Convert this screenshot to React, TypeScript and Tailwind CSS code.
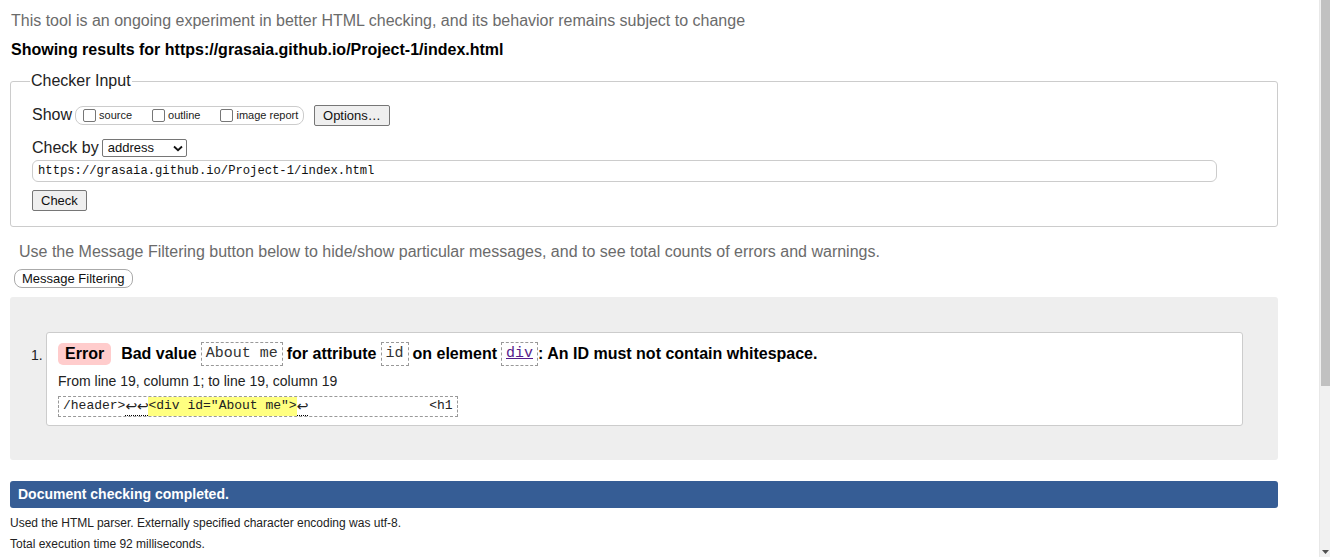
import React from 'react';

const sans = { fontFamily: '"Liberation Sans", Arial, sans-serif' };

function Checkbox({ label }: { label: string }) {
  return (
    <label className="flex items-center gap-[3px] whitespace-nowrap">
      <span className="inline-block w-[13px] h-[13px] border border-[#767676] rounded-[2px] bg-white" />
      <span className="text-[11px] text-[#222]">{label}</span>
    </label>
  );
}

function Code({ children }: { children: React.ReactNode }) {
  return (
    <span className="inline-block border border-dashed border-[#999] px-[4px] py-[1px] font-['Liberation_Mono',monospace] font-normal text-[15px] leading-[20px] text-[#333] bg-white">
      {children}
    </span>
  );
}

function Lf({ n = 1 }: { n?: number }) {
  return (
    <span className="inline-flex border-b border-dotted border-[#000]">
      {Array.from({ length: n }).map((_, i) => (
        <span key={i} className="inline-block w-[11.5px] text-center font-['DejaVu_Sans',sans-serif] text-[14px] leading-[18px]">↩</span>
      ))}
    </span>
  );
}

export default function App() {
  return (
    <div className="flex w-[1330px] h-[557px] overflow-hidden bg-white" style={sans}>
      <div className="flex-1 pl-[10px] pr-[41px] text-[#000]">
        {/* intro */}
        <p className="pt-[10px] pl-[1px] text-[16px] leading-[22px] text-[#6b6b6b]">
          This tool is an ongoing experiment in better HTML checking, and its behavior remains subject to change
        </p>
        <p className="mt-[8px] pl-[1px] text-[16px] leading-[20px] font-bold">
          Showing results for https://grasaia.github.io/Project-1/index.html
        </p>

        {/* checker input */}
        <fieldset className="mt-[11px] border border-[#ccc] rounded-[3px] px-[21px] pb-[14px] pt-[12px]">
          <legend className="-ml-[2px] px-[1px] text-[16px] leading-[20px] text-[#222]">Checker Input</legend>
          <div className="flex items-center h-[24px]">
            <span className="text-[16px] text-[#222] mr-[3px]">Show</span>
            <div className="flex items-center gap-[20px] border border-[#ccc] rounded-[8px] h-[19px] pl-[7px] pr-[5px] w-[229px]">
              <Checkbox label="source" />
              <Checkbox label="outline" />
              <Checkbox label="image report" />
            </div>
            <button className="ml-[10px] h-[21px] px-[8px] border border-[#767676] rounded-[2px] bg-[#efefef] text-[13px] text-[#111]">
              Options…
            </button>
          </div>
          <div className="flex items-center mt-[11px] h-[20px]">
            <span className="text-[16px] text-[#222] mr-[3px]">Check by</span>
            <div className="flex items-center justify-between w-[85px] h-[18px] border border-[#767676] rounded-[2px] pl-[5px] pr-[3px] text-[13px] text-[#111]">
              <span>address</span>
              <svg width="10" height="7" viewBox="0 0 10 7">
                <path d="M1 1.5 L5 5.2 L9 1.5" fill="none" stroke="#111" strokeWidth="1.8" />
              </svg>
            </div>
          </div>
          <div className="mt-[2px] w-[1185px] h-[22px] border border-[#ccc] rounded-[6px] flex items-center pl-[5px] font-['Liberation_Mono',monospace] text-[12.2px] text-[#111]">
            https://grasaia.github.io/Project-1/index.html
          </div>
          <button className="mt-[8px] h-[21px] px-[8px] border border-[#767676] rounded-[2px] bg-[#efefef] text-[13px] text-[#111]">
            Check
          </button>
        </fieldset>

        {/* filtering */}
        <p className="mt-[14px] pl-[9px] text-[16px] leading-[22px] text-[#6b6b6b]">
          Use the Message Filtering button below to hide/show particular messages, and to see total counts of errors and warnings.
        </p>
        <button className="mt-[6px] ml-[4px] h-[19px] px-[7px] border border-[#aaa] rounded-[8px] bg-white text-[13px] text-[#111] leading-[17px]">
          Message Filtering
        </button>

        {/* results */}
        <div className="mt-[7px] bg-[#eee] rounded-[3px] pt-[35px] pb-[34px] pr-[35px] pl-[21px] flex">
          <span className="w-[15px] pt-[13px] text-[14px] text-[#222]">1.</span>
          <div className="flex-1 bg-white border border-[#ccc] rounded-[3px] pl-[11px] pr-[10px] pt-[9px] pb-[8px]">
            <div className="flex items-center gap-[4px] text-[16px] font-bold leading-[24px]">
              <span className="bg-[#fcc] rounded-[5px] px-[7px] leading-[22px] mr-[6px]">Error</span>
              <span>Bad value</span>
              <Code>About me</Code>
              <span>for attribute</span>
              <Code>id</Code>
              <span>on element</span>
              <Code>
                <span className="underline text-[#551a8b]">div</span>
              </Code>
              <span className="-ml-[4px]">: An ID must not contain whitespace.</span>
            </div>
            <p className="mt-[6px] text-[14px] leading-[18px] text-[#222]">From line 19, column 1; to line 19, column 19</p>
            <div className="mt-[6px] inline-flex border border-dashed border-[#999] px-[4px] font-['Liberation_Mono',monospace] text-[13px] leading-[18px] text-[#222] whitespace-pre">
              <span>/header&gt;</span>
              <Lf n={2} />
              <span className="bg-[#ffff80]">&lt;div id="About me"&gt;</span>
              <Lf />
              <span className="pl-[4px]">{'               <h1'}</span>
            </div>
          </div>
        </div>

        {/* done */}
        <div className="mt-[21px] h-[27px] bg-[#365d95] rounded-[3px] flex items-center pl-[8px] text-[14px] font-bold text-white">
          Document checking completed.
        </div>
        <p className="mt-[7px] text-[12px] leading-[16px] text-[#222]">
          Used the HTML parser. Externally specified character encoding was utf-8.
        </p>
        <p className="mt-[5px] text-[12px] leading-[16px] text-[#222]">Total execution time 92 milliseconds.</p>
      </div>

      {/* scrollbar */}
      <div className="w-[11px] h-full bg-[#f1f1f1] border-l border-[#e8e8e8] flex flex-col">
        <div className="h-[386px] bg-[#c1c1c1] ml-[1px]" />
        <div className="flex-1" />
        <div className="flex justify-center pb-[3px]">
          <svg width="7" height="4" viewBox="0 0 7 4">
            <path d="M0 0 L7 0 L3.5 4 Z" fill="#505050" />
          </svg>
        </div>
      </div>
    </div>
  );
}
